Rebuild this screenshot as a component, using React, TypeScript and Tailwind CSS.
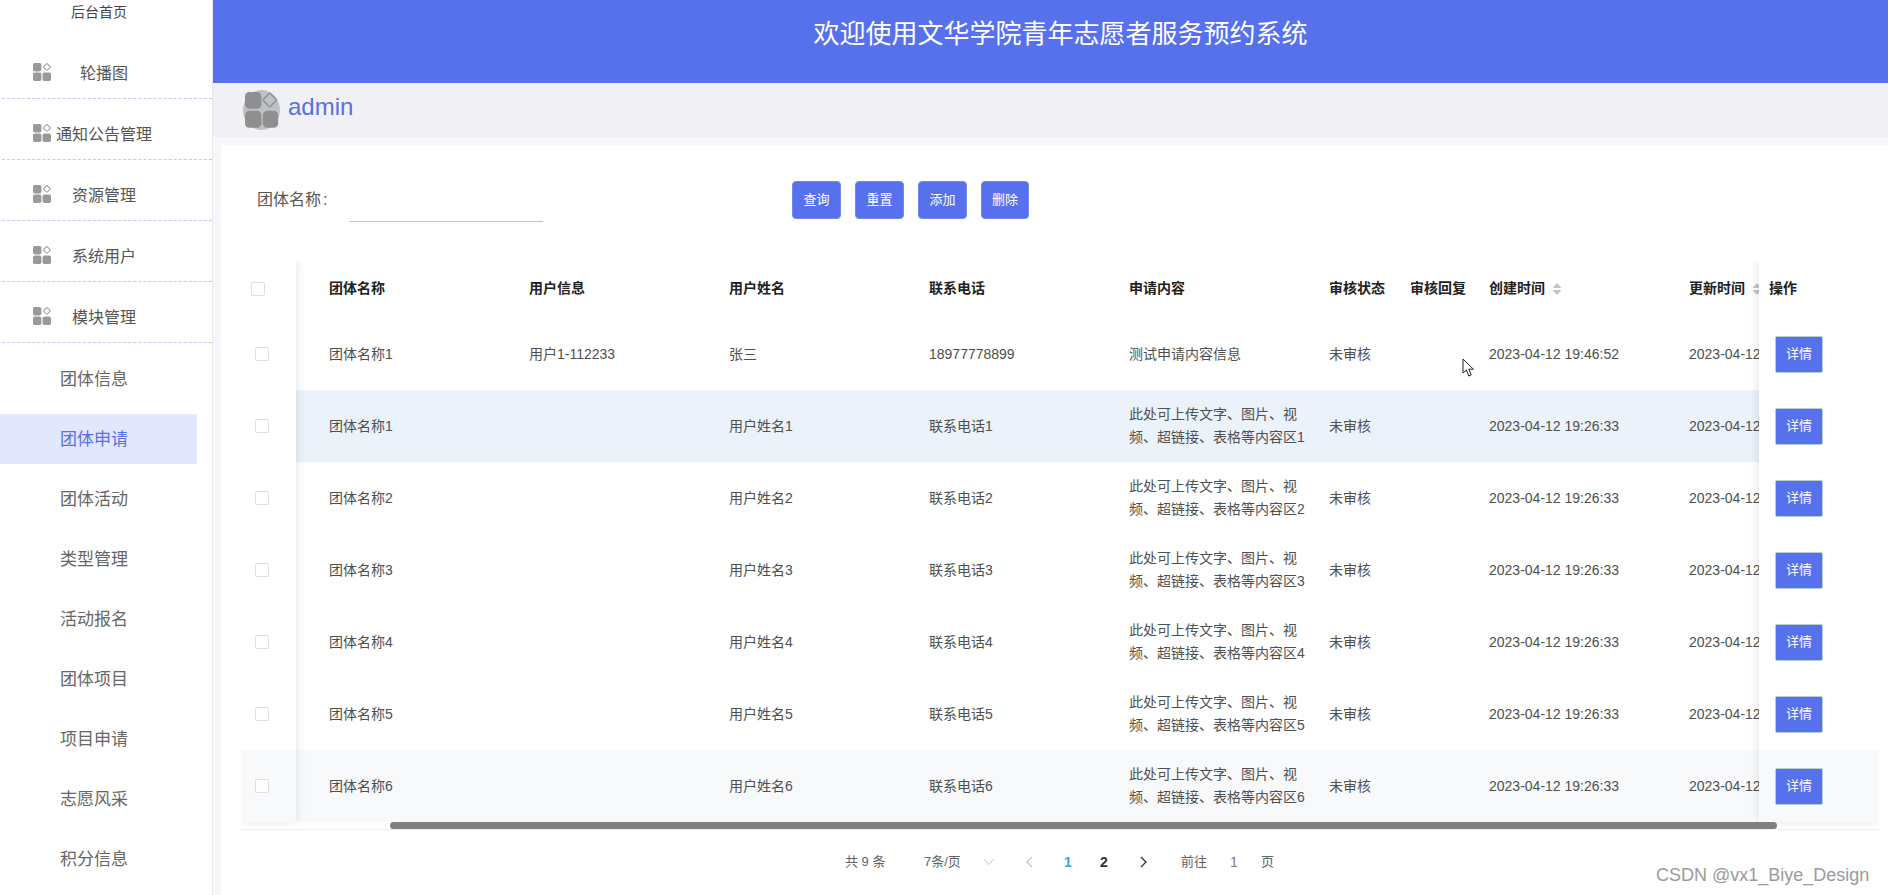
const FONT = "font-['Liberation_Sans','Noto_Sans_CJK_SC',sans-serif]";

function GridIcon() {
  return (
    <svg viewBox="0 0 18 18" className="w-[18px] h-[18px] shrink-0">
      <rect x="0" y="0" width="8.4" height="8.4" rx="1.8" fill="#999" />
      <rect x="0" y="9.6" width="8.4" height="8.4" rx="1.8" fill="#999" />
      <rect x="9.6" y="9.6" width="8.4" height="8.4" rx="1.8" fill="#999" />
      <rect x="11.4" y="1.4" width="5" height="5" rx="0.6" transform="rotate(45 13.9 3.9)" fill="none" stroke="#999" strokeWidth="1" />
    </svg>
  );
}

function Avatar() {
  return (
    <div className="w-[37px] h-[40px] rounded-[50%] bg-[#bcc2c8] flex items-center justify-center shrink-0">
      <svg viewBox="0 0 37 40" className="w-[37px] h-[40px]">
        <rect x="2" y="2" width="16.4" height="16.8" rx="4.5" fill="#8f8f8f" />
        <rect x="2" y="20.8" width="16.4" height="17" rx="4.5" fill="#8f8f8f" />
        <rect x="19.8" y="20.8" width="15.4" height="17" rx="4.5" fill="#8f8f8f" />
        <rect x="21.7" y="5" width="10" height="10" rx="1.2" transform="rotate(45 26.7 10)" fill="none" stroke="#8f8f8f" strokeWidth="1.4" />
      </svg>
    </div>
  );
}

const mains = ["轮播图", "通知公告管理", "资源管理", "系统用户", "模块管理"];
const subs = ["团体信息", "团体申请", "团体活动", "类型管理", "活动报名", "团体项目", "项目申请", "志愿风采", "积分信息"];

function Sidebar() {
  return (
    <aside className="w-[213px] shrink-0 h-full bg-white border-r border-[#e8e8ee] overflow-hidden">
      <div className="h-[38px] pt-[3px] pl-[71px] text-[14px] leading-[18px] text-[#444]">后台首页</div>
      {mains.map((m) => (
        <div key={m} className="h-[61px] flex items-center pl-[31px] ml-[2px] border-b border-dashed border-[#c5cbe6] pt-[10px] text-[16px] text-[#555]">
          <span className="-mt-[2px]"><GridIcon /></span>
          <span className="w-[106px] text-center pt-[2px] whitespace-nowrap">{m}</span>
        </div>
      ))}
      <div className="pt-[11px]">
        {subs.map((s) => (
          <div
            key={s}
            className={
              "h-[50px] mb-[10px] w-[197px] pl-[60px] pt-[1px] flex items-center text-[17px] " +
              (s === "团体申请" ? "bg-[#e2e7fb] text-[#5771dd]" : "text-[#666]")
            }
          >
            {s}
          </div>
        ))}
      </div>
    </aside>
  );
}

type Row = { name: string; info: string; user: string; phone: string; content: string; created: string };
const rows: Row[] = [
  { name: "团体名称1", info: "用户1-112233", user: "张三", phone: "18977778899", content: "测试申请内容信息", created: "2023-04-12 19:46:52" },
  ...[1, 2, 3, 4, 5, 6].map((n) => ({
    name: `团体名称${n}`,
    info: "",
    user: `用户姓名${n}`,
    phone: `联系电话${n}`,
    content: `此处可上传文字、图片、视频、超链接、表格等内容区${n}`,
    created: "2023-04-12 19:26:33",
  })),
];

function SortCaret() {
  return (
    <svg viewBox="0 0 10 14" className="w-[10px] h-[14px] ml-[7px] shrink-0">
      <path d="M5 1 L9.5 6 H0.5 Z" fill="#c0c4cc" />
      <path d="M5 13 L9.5 8 H0.5 Z" fill="#c0c4cc" />
    </svg>
  );
}

function Check() {
  return <span className="block w-[14px] h-[14px] rounded-[2px] border border-[#dcdfe6] bg-white" />;
}

const cellBase = "shrink-0 flex items-center";

function HeaderRow() {
  return (
    <div className="flex h-[58px] pb-[1px] text-[14px] font-bold text-[#222]">
      <div className={cellBase + " w-[88px]"} />
      <div className={cellBase + " w-[200px]"}>团体名称</div>
      <div className={cellBase + " w-[200px]"}>用户信息</div>
      <div className={cellBase + " w-[200px]"}>用户姓名</div>
      <div className={cellBase + " w-[200px]"}>联系电话</div>
      <div className={cellBase + " w-[200px]"}>申请内容</div>
      <div className={cellBase + " w-[81px]"}>审核状态</div>
      <div className={cellBase + " w-[79px]"}>审核回复</div>
      <div className={cellBase + " w-[200px]"}>创建时间<SortCaret /></div>
      <div className={cellBase + " w-[200px]"}>更新时间<SortCaret /></div>
    </div>
  );
}

const rowBg = (i: number) => (i === 1 ? "bg-[#ebf2fa]" : i === 6 ? "bg-[#f8f9fb]" : "bg-white");

function DataRow({ r, i }: { r: Row; i: number }) {
  return (
    <div className={"flex h-[72px] text-[14px] text-[#4f4f4f] " + rowBg(i)}>
      <div className={cellBase + " w-[88px]"} />
      <div className={cellBase + " w-[200px]"}>{r.name}</div>
      <div className={cellBase + " w-[200px]"}>{r.info}</div>
      <div className={cellBase + " w-[200px]"}>{r.user}</div>
      <div className={cellBase + " w-[200px]"}>{r.phone}</div>
      <div className={cellBase + " w-[200px]"}><span className="w-[178px] leading-[23px]">{r.content}</span></div>
      <div className={cellBase + " w-[81px]"}>未审核</div>
      <div className={cellBase + " w-[79px]"} />
      <div className={cellBase + " w-[200px] whitespace-nowrap"}>{r.created}</div>
      <div className={cellBase + " w-[200px] whitespace-nowrap"}>{r.created}</div>
    </div>
  );
}

function Table() {
  return (
    <div className="relative w-[1638px] h-[570px] overflow-hidden border-b border-[#ebeef5]">
      <div className="w-[1518px] overflow-hidden">
        <div className="w-[1750px]">
          <HeaderRow />
          {rows.map((r, i) => <DataRow key={i} r={r} i={i} />)}
        </div>
      </div>

      {/* fixed left */}
      <div className="absolute left-0 top-0 w-[55px] h-[561px] bg-white shadow-[0_0_10px_rgba(0,0,0,0.12)]">
        <div className="h-[58px] flex items-center pl-[10px]"><Check /></div>
        {rows.map((_, i) => (
          <div key={i} className={"h-[72px] flex items-center pl-[14px] " + (i === 6 ? "bg-[#f8f9fb]" : "bg-white")}>
            <Check />
          </div>
        ))}
      </div>

      {/* fixed right */}
      <div className="absolute left-[1518px] top-0 w-[120px] h-[561px] bg-white shadow-[0_0_10px_rgba(0,0,0,0.12)]">
        <div className="h-[58px] pb-[1px] flex items-center pl-[10px] text-[14px] font-bold text-[#222]">操作</div>
        {rows.map((_, i) => (
          <div key={i} className={"h-[72px] flex items-center pl-[16px] " + (i === 6 ? "bg-[#f8f9fb]" : "bg-white")}>
            <button className="w-[48px] h-[37px] rounded-[2px] bg-[#5771ec] border border-[#b5cfd6] text-white text-[13px]">详情</button>
          </div>
        ))}
      </div>

      {/* scrollbar */}
      <div className="absolute left-[149px] top-[562px] w-[1387px] h-[7px] rounded-full bg-[#808080]" />
    </div>
  );
}

function Pagination() {
  return (
    <div className="relative flex items-center h-[64px] pl-[604px] text-[13px] text-[#606266] whitespace-nowrap">
      <span className="w-[79px]">共 9 条</span>
      <span className="w-[60px]">7条/页</span>
      <svg viewBox="0 0 10 6" className="w-[10px] h-[6px] mr-[32px]" fill="none" stroke="#c0c4cc" strokeWidth="1">
        <path d="M0.5 0.5 L5 5.5 L9.5 0.5" />
      </svg>
      <svg viewBox="0 0 7 12" className="w-[7px] h-[12px] mr-[31px]" fill="none" stroke="#c0c4cc" strokeWidth="1.3">
        <path d="M6 1 L1 6 L6 11" />
      </svg>
      <span className="w-[36px] font-bold text-[14px] text-[#409eff]">1</span>
      <span className="w-[40px] font-bold text-[14px] text-[#303133]">2</span>
      <svg viewBox="0 0 7 12" className="w-[7px] h-[12px] mr-[34px]" fill="none" stroke="#303133" strokeWidth="1.3">
        <path d="M1 1 L6 6 L1 11" />
      </svg>
      <span className="w-[49px]">前往</span>
      <span className="w-[31px] text-[14px] text-[#7a7d83]">1</span>
      <span>页</span>
    </div>
  );
}

function Button({ label, w }: { label: string; w: string }) {
  return (
    <button className={"h-[38px] rounded-[4px] bg-[#5771ec] border border-[#7489ee] text-white text-[13px] " + w}>{label}</button>
  );
}

export default function App() {
  return (
    <div className={"relative flex w-[1888px] h-[895px] overflow-hidden bg-white " + FONT}>
      <Sidebar />
      <main className="flex-1 min-w-0 flex flex-col h-full">
        <header className="h-[83px] shrink-0 bg-[#5771ec] pl-[20px] pb-[15px] flex items-center justify-center text-white text-[26px]">
          欢迎使用文华学院青年志愿者服务预约系统
        </header>
        <div className="h-[54px] shrink-0 bg-[#f0f0f5] pl-[30px] flex items-center gap-[8px] text-[24px] text-[#5771dd]">
          <Avatar />
          <span className="-mt-[6px]">admin</span>
        </div>
        <div className="flex-1 min-h-0 bg-[#f7f7fa] pt-[8px] pl-[8px]">
          <div className="h-full bg-white pl-[20px]">
            <div className="h-[115px] pt-[36px] flex items-start">
              <div className="w-[108px] pl-[16px] h-[38px] flex items-center text-[16px] text-[#555] whitespace-nowrap">团体名称<span className="ml-[2px]">:</span></div>
              <div className="w-[194px] h-[41px] border-b border-[#c4c4c4] mr-[249px]" />
              <div className="flex gap-[14px]">
                <Button label="查询" w="w-[49px]" />
                <Button label="重置" w="w-[49px]" />
                <Button label="添加" w="w-[49px]" />
                <Button label="删除" w="w-[48px]" />
              </div>
            </div>
            <Table />
            <Pagination />
          </div>
        </div>
      </main>

      {/* mouse pointer */}
      <svg viewBox="0 0 13 20" className="absolute left-[1462px] top-[358px] w-[13px] h-[20px]">
        <path d="M1 1 L1 15 L4.4 12 L6.8 18 L9.2 17 L6.8 11.2 L11.4 11.2 Z" fill="#fff" stroke="#222" strokeWidth="1" />
      </svg>

      {/* watermark */}
      <div className="absolute left-[1656px] top-[863px] text-[18px] leading-[24px] text-[#9a9a9a] whitespace-nowrap">CSDN @vx1_Biye_Design</div>
    </div>
  );
}
